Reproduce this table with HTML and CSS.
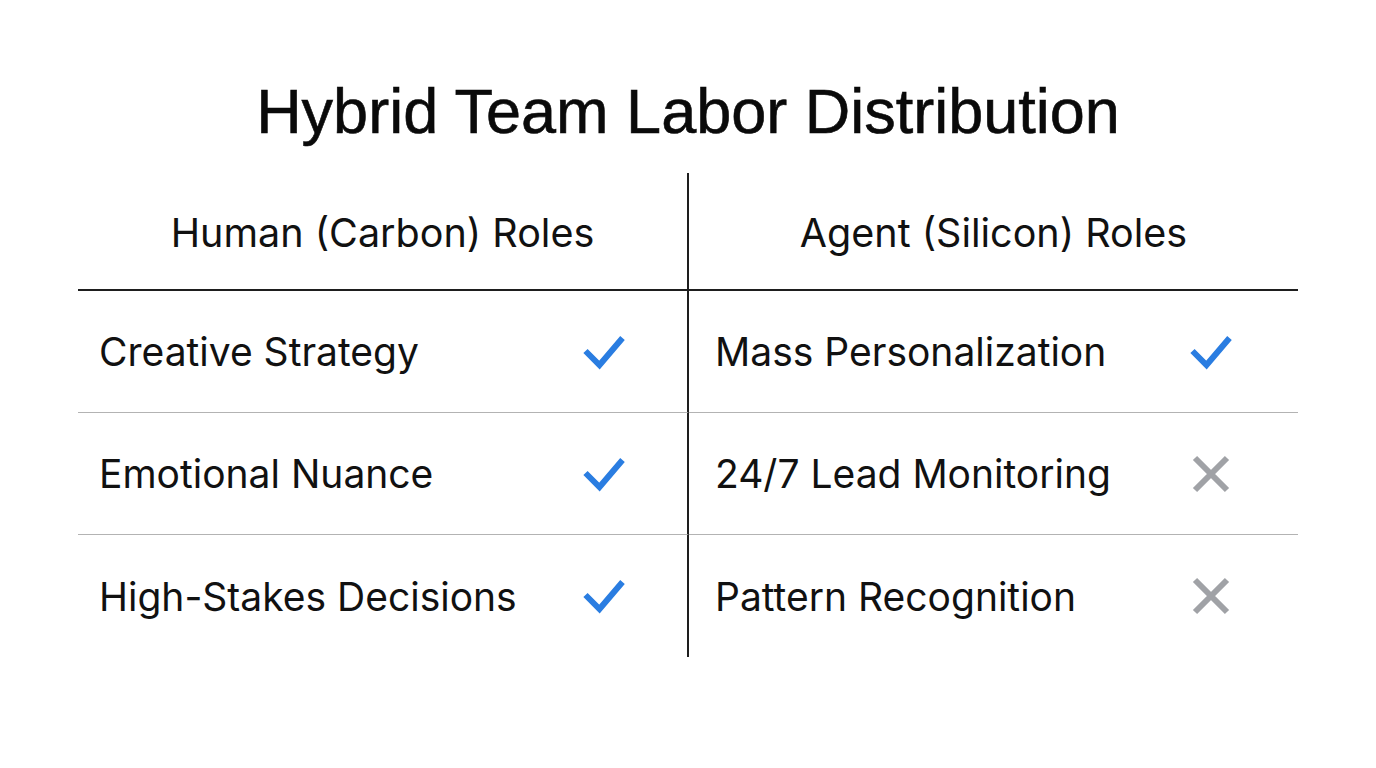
FILE: index.html
```html
<!DOCTYPE html>
<html lang="en">
<head>
<meta charset="utf-8">
<title>Hybrid Team Labor Distribution</title>
<link rel="stylesheet" href="styles.css">
</head>
<body>
<main class="page">
  <h1 class="title">Hybrid Team Labor Distribution</h1>
  <div class="table">
    <div class="head left">Human (Carbon) Roles</div>
    <div class="head right">Agent (Silicon) Roles</div>

    <div class="cell left">
      <span class="label">Creative Strategy</span>
      <svg class="icon" viewBox="0 0 48 40" width="48" height="40"><polyline class="check" points="5.5,19 19.5,33 42.5,6"/></svg>
    </div>
    <div class="cell right">
      <span class="label">Mass Personalization</span>
      <svg class="icon" viewBox="0 0 48 40" width="48" height="40"><polyline class="check" points="5.5,19 19.5,33 42.5,6"/></svg>
    </div>

    <div class="cell left">
      <span class="label">Emotional Nuance</span>
      <svg class="icon" viewBox="0 0 48 40" width="48" height="40"><polyline class="check" points="5.5,19 19.5,33 42.5,6"/></svg>
    </div>
    <div class="cell right">
      <span class="label">24/7 Lead Monitoring</span>
      <svg class="icon" viewBox="0 0 48 48" width="48" height="48"><path class="cross" d="M8 8 L40 40 M40 8 L8 40"/></svg>
    </div>

    <div class="cell left last">
      <span class="label">High-Stakes Decisions</span>
      <svg class="icon" viewBox="0 0 48 40" width="48" height="40"><polyline class="check" points="5.5,19 19.5,33 42.5,6"/></svg>
    </div>
    <div class="cell right last">
      <span class="label">Pattern Recognition</span>
      <svg class="icon" viewBox="0 0 48 48" width="48" height="48"><path class="cross" d="M8 8 L40 40 M40 8 L8 40"/></svg>
    </div>
  </div>
</main>
</body>
</html>
```

FILE: styles.css
```css
html, body {
  margin: 0;
  padding: 0;
  background: #ffffff;
}

.page {
  width: 1376px;
  height: 768px;
  padding-top: 76px;
  box-sizing: border-box;
  font-family: Inter, "Liberation Sans", sans-serif;
  color: #111111;
}

.title {
  margin: 0;
  text-align: center;
  font-family: "Liberation Sans", Arial, sans-serif;
  font-weight: 400;
  font-size: 63px;
  line-height: 70px;
  color: #0a0a0a;
  -webkit-text-stroke: 0.6px #0a0a0a;
}

.table {
  margin: 27px 0 0 78px;
  width: 1220px;
  display: grid;
  grid-template-columns: 611px 609px;
}

.head {
  display: flex;
  align-items: center;
  justify-content: center;
  font-size: 39.5px;
  border-bottom: 2px solid #1e1e1e;
  padding-top: 3px;
  box-sizing: border-box;
  height: 118px;
}

.left {
  border-right: 2px solid #1e1e1e;
}

.cell {
  height: 122px;
  box-sizing: border-box;
  display: flex;
  align-items: center;
  justify-content: space-between;
  border-bottom: 1px solid #b3b3b3;
  font-size: 39px;
}

.cell.last {
  border-bottom: none;
}

.cell.left {
  padding: 0 59px 0 21px;
}

.cell.right {
  padding: 0 63px 0 26px;
}

.icon {
  display: block;
  flex: none;
}

.check {
  fill: none;
  stroke: #2a7de1;
  stroke-width: 6;
  stroke-linecap: butt;
  stroke-linejoin: miter;
}

.cross {
  fill: none;
  stroke: #a0a2a6;
  stroke-width: 6;
  stroke-linecap: butt;
}
```
